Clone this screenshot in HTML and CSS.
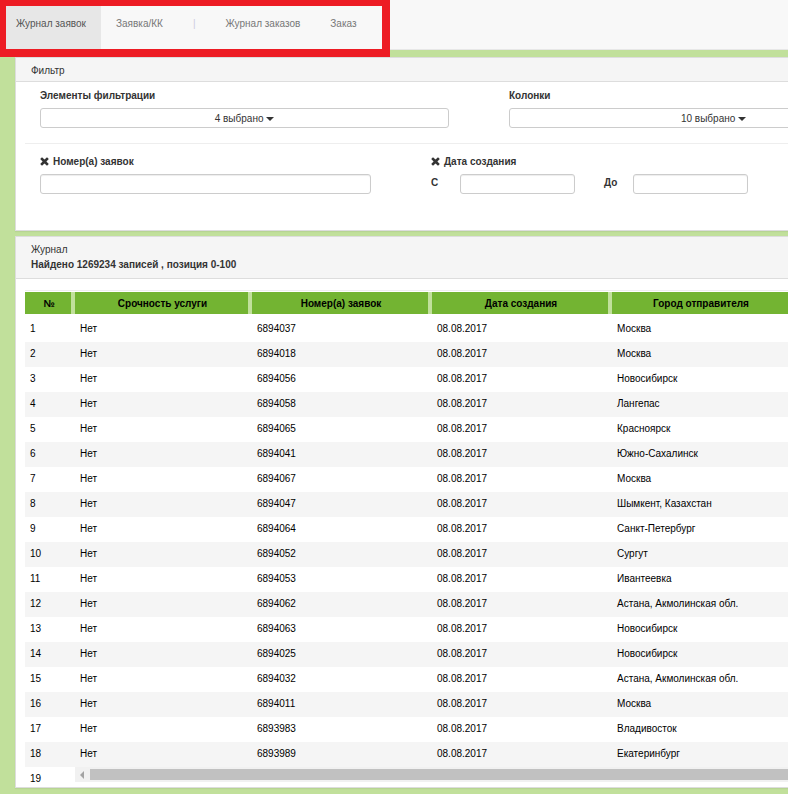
FILE: index.html
```html
<!DOCTYPE html>
<html lang="ru">
<head>
    <meta charset="UTF-8">
    <meta name="viewport" content="width=device-width, initial-scale=1.0">
    <title>Журнал заявок</title>
    <link rel="stylesheet" href="styles.css">
</head>
<body>

    <nav class="navbar">
        <a class="nav-link active" href="#">Журнал заявок</a>
        <a class="nav-link" href="#">Заявка/КК</a>
        <span class="nav-divider">|</span>
        <a class="nav-link" href="#">Журнал заказов</a>
        <a class="nav-link" href="#">Заказ</a>
        <div class="highlight"></div>
    </nav>

    <main class="content">
        <section class="panel">
            <div class="panel-heading">Фильтр</div>
            <div class="panel-body">
                <div class="selectors">
                    <div class="selector">
                        <label for="filterItems">Элементы фильтрации</label>
                        <button class="dropdown" id="filterItems" type="button">4 выбрано <span class="caret"></span></button>
                    </div>
                    <div class="selector">
                        <label for="columns">Колонки</label>
                        <button class="dropdown" id="columns" type="button">10 выбрано <span class="caret"></span></button>
                    </div>
                </div>
                <div class="filters">
                    <div class="filter-number">
                        <label for="numbers"><svg class="remove" viewBox="0 0 9 9"><path d="M2 0.3 4.5 2.6 7 0.3 8.8 2 6.4 4.5 8.8 7 7 8.7 4.5 6.4 2 8.7 0.2 7 2.6 4.5 0.2 2z"/></svg>Номер(а) заявок</label>
                        <input type="text" id="numbers">
                    </div>
                    <div class="filter-date">
                        <div class="filter-title"><svg class="remove" viewBox="0 0 9 9"><path d="M2 0.3 4.5 2.6 7 0.3 8.8 2 6.4 4.5 8.8 7 7 8.7 4.5 6.4 2 8.7 0.2 7 2.6 4.5 0.2 2z"/></svg>Дата создания</div>
                        <div class="dates">
                            <label for="dateFrom">С</label>
                            <input type="text" id="dateFrom">
                            <label for="dateTo">До</label>
                            <input type="text" id="dateTo">
                        </div>
                    </div>
                </div>
            </div>
        </section>

        <section class="panel journal">
            <div class="panel-heading">
                <div>Журнал</div>
                <strong>Найдено 1269234 записей , позиция 0-100</strong>
            </div>
            <div class="grid">
                <table>
                    <colgroup>
                        <col class="col-index">
                        <col class="col-urgency">
                        <col class="col-data">
                        <col class="col-data">
                        <col class="col-data">
                    </colgroup>
                    <thead>
                        <tr><th>№</th><th>Срочность услуги</th><th>Номер(а) заявок</th><th>Дата создания</th><th>Город отправителя</th></tr>
                    </thead>
                    <tbody>
                        <tr><td>1</td><td>Нет</td><td>6894037</td><td>08.08.2017</td><td>Москва</td></tr>
                        <tr><td>2</td><td>Нет</td><td>6894018</td><td>08.08.2017</td><td>Москва</td></tr>
                        <tr><td>3</td><td>Нет</td><td>6894056</td><td>08.08.2017</td><td>Новосибирск</td></tr>
                        <tr><td>4</td><td>Нет</td><td>6894058</td><td>08.08.2017</td><td>Лангепас</td></tr>
                        <tr><td>5</td><td>Нет</td><td>6894065</td><td>08.08.2017</td><td>Красноярск</td></tr>
                        <tr><td>6</td><td>Нет</td><td>6894041</td><td>08.08.2017</td><td>Южно-Сахалинск</td></tr>
                        <tr><td>7</td><td>Нет</td><td>6894067</td><td>08.08.2017</td><td>Москва</td></tr>
                        <tr><td>8</td><td>Нет</td><td>6894047</td><td>08.08.2017</td><td>Шымкент, Казахстан</td></tr>
                        <tr><td>9</td><td>Нет</td><td>6894064</td><td>08.08.2017</td><td>Санкт-Петербург</td></tr>
                        <tr><td>10</td><td>Нет</td><td>6894052</td><td>08.08.2017</td><td>Сургут</td></tr>
                        <tr><td>11</td><td>Нет</td><td>6894053</td><td>08.08.2017</td><td>Ивантеевка</td></tr>
                        <tr><td>12</td><td>Нет</td><td>6894062</td><td>08.08.2017</td><td>Астана, Акмолинская обл.</td></tr>
                        <tr><td>13</td><td>Нет</td><td>6894063</td><td>08.08.2017</td><td>Новосибирск</td></tr>
                        <tr><td>14</td><td>Нет</td><td>6894025</td><td>08.08.2017</td><td>Новосибирск</td></tr>
                        <tr><td>15</td><td>Нет</td><td>6894032</td><td>08.08.2017</td><td>Астана, Акмолинская обл.</td></tr>
                        <tr><td>16</td><td>Нет</td><td>6894011</td><td>08.08.2017</td><td>Москва</td></tr>
                        <tr><td>17</td><td>Нет</td><td>6893983</td><td>08.08.2017</td><td>Владивосток</td></tr>
                        <tr><td>18</td><td>Нет</td><td>6893989</td><td>08.08.2017</td><td>Екатеринбург</td></tr>
                        <tr><td>19</td><td></td><td></td><td></td><td></td></tr>
                    </tbody>
                </table>
                <div class="scrollbar">
                    <span class="scroll-arrow"></span>
                    <span class="scroll-thumb"></span>
                </div>
            </div>
        </section>
    </main>

</body>
</html>
```
FILE: styles.css
```css
* {
    box-sizing: border-box;
}
body {
    display: flex;
    flex-direction: column;
    height: 100vh;
    margin: 0;
    overflow: hidden;
    background-color: #c1e09b;
    color: #333;
    font-family: "Liberation Sans", Arial, sans-serif;
    font-size: 10px;
    line-height: 15px;
}
label,
.filter-title {
    display: block;
    font-weight: bold;
}

/* top menu */
.navbar {
    position: relative;
    display: flex;
    flex: none;
    height: 50px;
    padding-left: 1px;
    background-color: #f8f8f8;
    border-bottom: 1px solid #e7e7e7;
}
.nav-link,
.nav-divider {
    padding: 16px 15px;
    color: #777;
    text-decoration: none;
}
.nav-divider {
    color: #ccccdd;
}
.nav-link.active {
    background-color: #e7e7e7;
    color: #555;
}
.highlight {
    position: absolute;
    top: 0;
    left: 0;
    z-index: 2;
    width: 390px;
    height: 57px;
    border: solid #ed1c24;
    border-width: 6px 8px 8px 6px;
    pointer-events: none;
}

/* panels */
.content {
    display: flex;
    flex: 1;
    flex-direction: column;
    gap: 5px;
    min-height: 0;
    padding: 7px 0 6px 15px;
}
.panel {
    overflow: hidden;
    background-color: #fff;
    border: 1px solid #ddd;
    border-right: 0;
    box-shadow: 0 1px 1px rgba(0, 0, 0, 0.05);
}
.panel-heading {
    padding: 5px 15px 3px;
    background-color: #f5f5f5;
    border-bottom: 1px solid #ddd;
}
.panel-body {
    padding: 6px 0 36px 9px;
}

/* filter */
.selectors {
    display: flex;
    gap: 60px;
    padding: 0 15px 15px;
    border-bottom: 1px solid #eee;
}
.selector {
    flex: none;
    width: 409px;
}
.dropdown,
input {
    display: block;
    width: 100%;
    height: 20px;
    padding: 0 5px;
    background-color: #fff;
    border: 1px solid #ccc;
    border-radius: 3px;
    color: #333;
    font: inherit;
}
.dropdown {
    margin-top: 5px;
    cursor: pointer;
}
.caret {
    display: inline-block;
    border: 4px solid transparent;
    border-top-color: #333;
    border-bottom: 0;
    vertical-align: middle;
}
input {
    box-shadow: inset 0 1px 1px rgba(0, 0, 0, 0.075);
}
.filters {
    display: flex;
    gap: 60px;
    padding: 10px 15px 0;
}
.filter-number {
    width: 331px;
}
.filter-number input {
    margin-top: 5px;
}
.remove {
    width: 9px;
    height: 9px;
    margin-right: 4px;
    fill: #333;
    vertical-align: -1px;
}
.dates {
    display: grid;
    grid-template-columns: 29px 115px 58px 115px;
    align-items: start;
    padding-top: 5px;
}
.dates label {
    padding-top: 1px;
}
.dates input + label {
    padding-left: 29px;
}

/* journal */
.journal {
    display: flex;
    flex: 1;
    flex-direction: column;
    min-height: 0;
}
.journal .panel-heading {
    padding-bottom: 6px;
}
.grid {
    position: relative;
    flex: 1;
    margin: 11px 0 0 9px;
    padding-top: 1px;
    overflow: hidden;
    border-top: 1px solid #eee;
}
table {
    width: 767px;
    table-layout: fixed;
    border-spacing: 0;
    color: #000;
}
.col-index {
    width: 50px;
}
.col-urgency {
    width: 177px;
}
.col-data {
    width: 180px;
}
th {
    height: 22px;
    padding: 0 0 0 2px;
    background-color: #73b432;
    border-right: 4px solid #c1e09b;
}
tbody::before {
    content: "";
    display: block;
    height: 3px;
}
td {
    height: 25px;
    padding: 0 5px 2px;
}
tbody tr:nth-child(even) {
    background-color: #f5f5f5;
}
.scrollbar {
    position: absolute;
    right: 0;
    bottom: 5px;
    left: 50px;
    display: flex;
    align-items: center;
    height: 15px;
    background-color: #f1f1f1;
}
.scroll-arrow {
    margin: 0 6px 0 5px;
    border: 4px solid transparent;
    border-right-color: #a3a3a3;
    border-left: 0;
}
.scroll-thumb {
    flex: 1;
    height: 11px;
    background-color: #c1c1c1;
}
```
